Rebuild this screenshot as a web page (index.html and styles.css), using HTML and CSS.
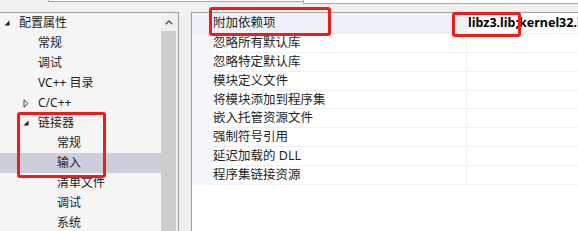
FILE: index.html
```html
<!DOCTYPE html>
<html lang="zh-CN">
<head>
  <meta charset="UTF-8">
  <title>链接器 - 输入</title>
  <link rel="stylesheet" href="styles.css">
</head>
<body>
  <div class="top-strip">
    <div class="top-box-a"></div>
    <div class="top-box-b"></div>
  </div>

  <div class="main">
    <div class="left-panel">
      <div class="tree">
        <div class="tree-row lvl0">
          <span class="arrow"><svg width="6" height="6" viewBox="0 0 6 6"><polygon points="5.5,0.5 5.5,5.5 0.5,5.5" fill="#1e1e1e"/></svg></span>
          <span>配置属性</span>
        </div>
        <div class="tree-row lvl1"><span class="arrow"></span><span>常规</span></div>
        <div class="tree-row lvl1"><span class="arrow"></span><span>调试</span></div>
        <div class="tree-row lvl1"><span class="arrow"></span><span>VC++ 目录</span></div>
        <div class="tree-row lvl1">
          <span class="arrow"><svg width="6" height="9" viewBox="0 0 6 9"><polygon points="1,0.8 5,4.5 1,8.2" fill="none" stroke="#404040" stroke-width="1"/></svg></span>
          <span>C/C++</span>
        </div>
        <div class="tree-row lvl1">
          <span class="arrow"><svg width="6" height="6" viewBox="0 0 6 6"><polygon points="5.5,0.5 5.5,5.5 0.5,5.5" fill="#1e1e1e"/></svg></span>
          <span>链接器</span>
        </div>
        <div class="tree-row lvl2"><span class="arrow"></span><span>常规</span></div>
        <div class="tree-row lvl2 selected"><span class="arrow"></span><span>输入</span></div>
        <div class="tree-row lvl2"><span class="arrow"></span><span>清单文件</span></div>
        <div class="tree-row lvl2"><span class="arrow"></span><span>调试</span></div>
        <div class="tree-row lvl2"><span class="arrow"></span><span>系统</span></div>
      </div>
      <div class="scrollbar">
        <div class="scroll-up">
          <svg width="8" height="5" viewBox="0 0 8 5"><polyline points="0.7,4.3 4,1 7.3,4.3" fill="none" stroke="#505050" stroke-width="1.4"/></svg>
        </div>
        <div class="scroll-thumb"></div>
      </div>
    </div>

    <div class="splitter"></div>

    <div class="right-panel">
      <div class="prop-row first">
        <div class="gutter"></div>
        <div class="prop-name">附加依赖项</div>
        <div class="prop-value">libz3.lib;kernel32.lib</div>
      </div>
      <div class="prop-row">
        <div class="gutter"></div>
        <div class="prop-name">忽略所有默认库</div>
        <div class="prop-value"></div>
      </div>
      <div class="prop-row">
        <div class="gutter"></div>
        <div class="prop-name">忽略特定默认库</div>
        <div class="prop-value"></div>
      </div>
      <div class="prop-row">
        <div class="gutter"></div>
        <div class="prop-name">模块定义文件</div>
        <div class="prop-value"></div>
      </div>
      <div class="prop-row short">
        <div class="gutter"></div>
        <div class="prop-name">将模块添加到程序集</div>
        <div class="prop-value"></div>
      </div>
      <div class="prop-row">
        <div class="gutter"></div>
        <div class="prop-name">嵌入托管资源文件</div>
        <div class="prop-value"></div>
      </div>
      <div class="prop-row">
        <div class="gutter"></div>
        <div class="prop-name">强制符号引用</div>
        <div class="prop-value"></div>
      </div>
      <div class="prop-row">
        <div class="gutter"></div>
        <div class="prop-name">延迟加载的 DLL</div>
        <div class="prop-value"></div>
      </div>
      <div class="prop-row">
        <div class="gutter"></div>
        <div class="prop-name">程序集链接资源</div>
        <div class="prop-value"></div>
      </div>
    </div>
  </div>

  <!-- red annotation boxes -->
  <div class="mark mark-name"></div>
  <div class="mark mark-value"></div>
  <div class="mark mark-tree"></div>
</body>
</html>
```

FILE: styles.css
```css
* {
  margin: 0;
  padding: 0;
  box-sizing: border-box;
}

body {
  position: relative;
  width: 578px;
  height: 231px;
  overflow: hidden;
  background-color: #f0f0f0;
  color: #1e1e1e;
  font-family: "Noto Sans", "Noto Sans CJK SC", sans-serif;
}

/* strip of controls cut off at the top */
.top-strip {
  display: flex;
  height: 12px;
}

.top-box-a {
  margin-left: 48px;
  width: 255px;
  height: 2px;
  background-color: #fff;
  border-left: 1px solid #a8a8a8;
  border-bottom: 1px solid #a8a8a8;
}

.top-box-b {
  flex: 1;
  height: 4px;
  background-color: #fff;
  border-left: 1px solid #a8a8a8;
  border-bottom: 1px solid #a8a8a8;
}

.main {
  display: flex;
  height: 219px;
}

/* Left tree */
.left-panel {
  display: flex;
  flex-shrink: 0;
  width: 179px;
  border-top: 1px solid #a0a0a0;
  border-right: 1px solid #a0a0a0;
}

.tree {
  flex-shrink: 0;
  width: 161px;
  background-color: #f5f5f5;
  font-size: 12px;
}

.tree-row {
  display: flex;
  align-items: center;
  height: 20px;
  line-height: 20px;
  white-space: nowrap;
}

.tree-row.lvl0 { padding-left: 4px; }
.tree-row.lvl1 { padding-left: 23px; }
.tree-row.lvl2 { padding-left: 42px; }

.tree-row.selected {
  background-color: #cccedb;
}

.arrow {
  display: flex;
  align-items: center;
  width: 15px;
  height: 20px;
}

.scrollbar {
  display: flex;
  flex-direction: column;
  flex-shrink: 0;
  width: 17px;
  background-color: #f0f0f0;
}

.scroll-up {
  display: flex;
  align-items: center;
  justify-content: center;
  height: 18px;
  padding-right: 2px;
}

.scroll-thumb {
  flex: 1;
  width: 15px;
  background-color: #cdcdcd;
}

.splitter {
  flex-shrink: 0;
  width: 12px;
}

/* Property grid */
.right-panel {
  flex: 1;
  min-width: 0;
  background-color: #fff;
  border-top: 1px solid #a0a0a0;
  border-left: 1px solid #a0a0a0;
  font-size: 12.5px;
}

.prop-row {
  display: flex;
  height: 19px;
  white-space: nowrap;
}

.prop-row.first {
  height: 21px;
}

.prop-row.short {
  height: 18px;
}

.gutter {
  flex-shrink: 0;
  width: 21px;
  background-color: #f5f7fc;
}

.prop-name {
  flex-shrink: 0;
  width: 253px;
  line-height: 18px;
  border-bottom: 1px solid #edf0f5;
}

.prop-value {
  flex: 1;
  min-width: 0;
  overflow: hidden;
  padding-left: 1px;
  line-height: 20px;
  border-left: 1px solid #edf0f5;
  border-bottom: 1px solid #edf0f5;
  font-weight: bold;
  color: #000;
}

.prop-row.first .gutter,
.prop-row.first .prop-name {
  background-color: #eef1f8;
}

.prop-row.first .prop-name {
  line-height: 20px;
}

/* red annotations */
.mark {
  position: absolute;
  border: 3px solid #f21b1b;
  border-radius: 3px;
}

.mark-name {
  left: 209px;
  top: 7px;
  width: 122px;
  height: 29px;
}

.mark-value {
  left: 452px;
  top: 12px;
  width: 69px;
  height: 25px;
}

.mark-tree {
  left: 17px;
  top: 112px;
  width: 89px;
  height: 66px;
}
```
